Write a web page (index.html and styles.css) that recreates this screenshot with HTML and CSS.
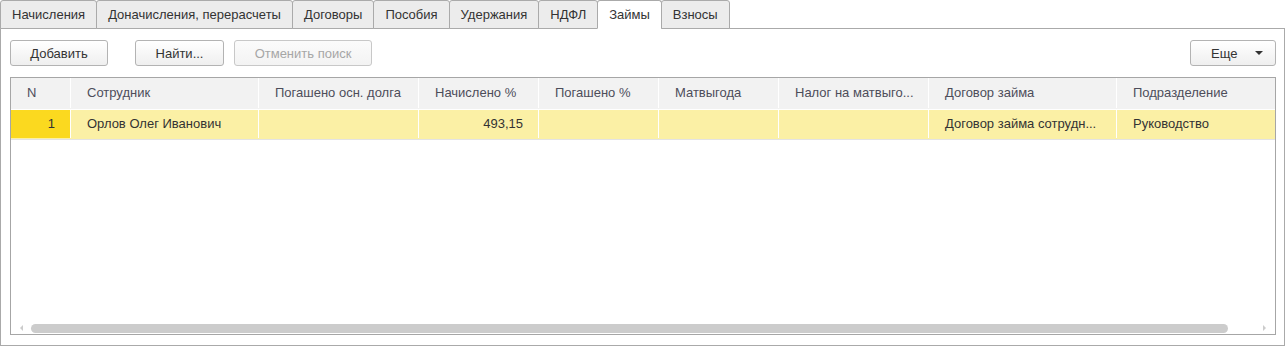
FILE: index.html
```html
<!DOCTYPE html>
<html lang="ru">
<head>
  <meta charset="UTF-8">
  <title>Займы</title>
  <link rel="stylesheet" href="styles.css">
</head>
<body>
  <!-- вкладки -->
  <div class="tabs">
    <div class="tab">Начисления</div>
    <div class="tab">Доначисления, перерасчеты</div>
    <div class="tab">Договоры</div>
    <div class="tab">Пособия</div>
    <div class="tab">Удержания</div>
    <div class="tab">НДФЛ</div>
    <div class="tab active">Займы</div>
    <div class="tab">Взносы</div>
  </div>

  <div class="panel">
    <!-- командная панель -->
    <div class="toolbar">
      <button class="btn btn-add">Добавить</button>
      <button class="btn btn-find">Найти...</button>
      <button class="btn btn-cancel" disabled>Отменить поиск</button>
      <button class="btn btn-more">Еще <span class="caret"></span></button>
    </div>

    <!-- таблица -->
    <div class="grid">
      <div class="row head">
        <div class="cell">N</div>
        <div class="cell">Сотрудник</div>
        <div class="cell">Погашено осн. долга</div>
        <div class="cell">Начислено %</div>
        <div class="cell">Погашено %</div>
        <div class="cell">Матвыгода</div>
        <div class="cell">Налог на матвыго...</div>
        <div class="cell">Договор займа</div>
        <div class="cell">Подразделение</div>
      </div>
      <div class="row item">
        <div class="cell num current">1</div>
        <div class="cell">Орлов Олег Иванович</div>
        <div class="cell"></div>
        <div class="cell num">493,15</div>
        <div class="cell"></div>
        <div class="cell"></div>
        <div class="cell"></div>
        <div class="cell">Договор займа сотрудн...</div>
        <div class="cell">Руководство</div>
      </div>

      <div class="hscroll">
        <span class="arrow left"></span>
        <div class="thumb"></div>
        <span class="arrow right"></span>
      </div>
    </div>
  </div>
</body>
</html>
```

FILE: styles.css
```css
body {
  margin: 0;
  font-family: "Liberation Sans", Arial, sans-serif;
  font-size: 13px;
  color: #333;
  background: #fff;
}
.tabs {
  display: flex;
  height: 29px;
  margin-bottom: -1px;
  position: relative;
  z-index: 1;
}
.tab {
  box-sizing: border-box;
  height: 29px;
  padding: 0 11px;
  line-height: 27px;
  border: 1px solid #aaa;
  border-radius: 3px 3px 0 0;
  background: #ececec;
  color: #333;
  margin-left: -1px;
  white-space: nowrap;
}
.tab:first-child {
  margin-left: 0;
}
.tab.active {
  background: #fff;
  border-bottom-color: #fff;
}
.panel {
  box-sizing: border-box;
  width: 1285px;
  height: 318px;
  border: 1px solid #aaa;
  padding: 11px 8px 10px 9px;
  display: flex;
  flex-direction: column;
  gap: 11px;
}
.toolbar {
  display: flex;
  align-items: center;
  height: 26px;
}
.btn {
  box-sizing: border-box;
  height: 26px;
  padding: 0;
  font-family: inherit;
  font-size: 13px;
  color: #333;
  border: 1px solid #b3b3b3;
  border-radius: 3px;
  background: linear-gradient(#ffffff, #efefef);
}
.btn-add {
  width: 98px;
  margin-right: 27px;
}
.btn-find {
  width: 89px;
  margin-right: 10px;
}
.btn-cancel {
  width: 138px;
  color: #a6a6a6;
  border-color: #c8c8c8;
  background: linear-gradient(#fbfbfb, #f3f3f3);
}
.btn-more {
  width: 86px;
  margin-left: auto;
  display: flex;
  align-items: center;
  padding-left: 20px;
  gap: 18px;
}
.caret {
  width: 0;
  height: 0;
  border-left: 4px solid transparent;
  border-right: 4px solid transparent;
  border-top: 4px solid #333;
}
.grid {
  flex: 1;
  border: 1px solid #a6a6a6;
  position: relative;
}
.row {
  display: grid;
  grid-template-columns: 60px 188px 160px 120px 120px 120px 150px 188px 1fr;
}
.cell {
  box-sizing: border-box;
  border-right: 1px solid #fff;
  padding: 0 15px 0 16px;
  white-space: nowrap;
  overflow: hidden;
}
.cell:last-child {
  border-right: none;
}
.head {
  background: #f2f2f2;
  color: #4d4d5a;
  height: 31px;
  line-height: 30px;
  border-bottom: 1px solid #fff;
}
.head .cell {
  height: 30px;
}
.item {
  background: #fbf0a5;
  height: 29px;
  line-height: 28px;
  border-bottom: 1px solid #e3e3e3;
}
.item .cell {
  height: 28px;
}
.num {
  text-align: right;
}
.current {
  background: #fbd91f;
}
.hscroll {
  position: absolute;
  left: 0;
  right: 0;
  bottom: 1px;
  height: 10px;
  display: flex;
  align-items: center;
}
.thumb {
  position: absolute;
  left: 20px;
  width: 1197px;
  height: 9px;
  border-radius: 5px;
  background: #ccc;
}
.arrow {
  position: absolute;
  width: 0;
  height: 0;
  border-top: 3px solid transparent;
  border-bottom: 3px solid transparent;
}
.arrow.left {
  left: 9px;
  border-right: 3px solid #ccc;
}
.arrow.right {
  right: 9px;
  border-left: 3px solid #ccc;
}
```
